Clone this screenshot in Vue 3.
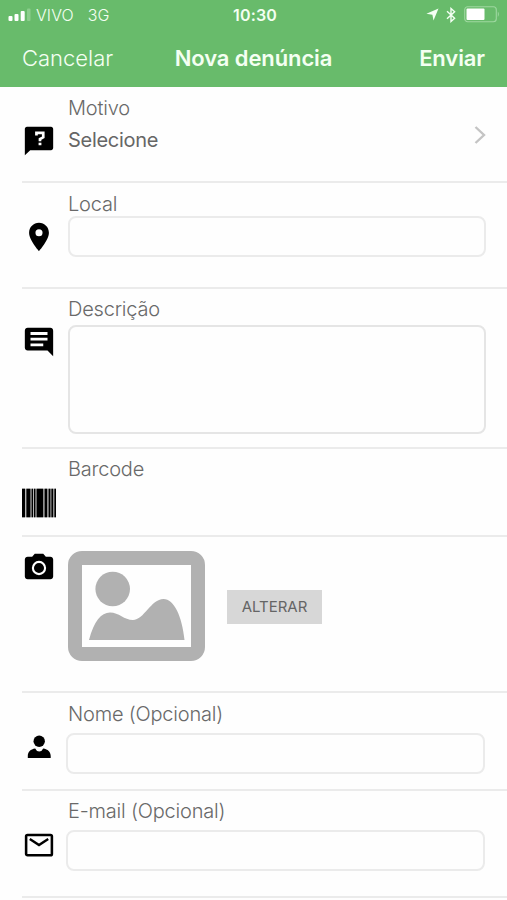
<script setup>
const bars = [
  { x: 0, w: 3 }, { x: 4.4, w: 4 }, { x: 9.6, w: 1.4 }, { x: 12, w: 1.4 },
  { x: 14.6, w: 6.6 }, { x: 22.6, w: 2.6 }, { x: 26.6, w: 1.8 }, { x: 29.4, w: 1.8 }, { x: 32.4, w: 2 },
]
</script>

<template>
  <div class="screen">
    <header class="header">
      <div class="status">
        <div class="carrier">
          <svg class="signal" width="24" height="13" viewBox="0 0 24 13">
            <rect x="0.5" y="8" width="4" height="5" rx="1" fill="#fff" />
            <rect x="6.5" y="6" width="4" height="7" rx="1" fill="#fff" />
            <rect x="12.7" y="3" width="4" height="10" rx="1" fill="#fff" />
            <rect x="19" y="0.5" width="3.5" height="12.5" rx="1" fill="#8bce8c" />
          </svg>
          <span class="vivo">VIVO</span>
          <span class="net">3G</span>
        </div>
        <span class="clock">10:30</span>
        <div class="indicators">
          <svg class="arrow" width="13" height="13" viewBox="0 0 13 13">
            <path d="M12.5 .5 7.5 12.5 6.4 6.7 .4 5.8z" fill="#f4fff4" />
          </svg>
          <svg class="bluetooth" width="10" height="16" viewBox="0 0 10 16">
            <path d="M1 4.3 8.6 11.3 5 14.5V1.5L8.6 4.7 1 11.7" fill="none" stroke="#f4fff4" stroke-width="1.4" />
          </svg>
          <svg class="battery" width="37" height="17" viewBox="0 0 37 17">
            <rect x="0.7" y="0.7" width="31.6" height="15" rx="3" fill="none" stroke="#9ed8a0" stroke-width="1.1" />
            <rect x="2.5" y="2.5" width="18" height="11.4" rx="1" fill="#fff" />
            <path d="M33.8 5.5q2.2 2.7 0 5.4z" fill="#9ed8a0" />
          </svg>
        </div>
      </div>
      <nav class="nav">
        <span class="cancel">Cancelar</span>
        <span class="title">Nova denúncia</span>
        <span class="send">Enviar</span>
      </nav>
    </header>

    <main class="form">
      <section class="row motivo">
        <svg class="icon" viewBox="0 0 24 24">
          <path d="M3.5 2h17c.8 0 1.5.7 1.5 1.5V17c0 .8-.7 1.5-1.5 1.5H5.800L2 22V3.500C2 2.700 2.700 2 3.500 2z" />
          <path d="M10.200 8.200V6.300h4.800v3.100l-2.300 1.300v1.500" fill="none" stroke="#fff" stroke-width="1.900" />
          <path d="M11.700 13.200h2v1.800h-2z" fill="#fff" />
        </svg>
        <div class="body">
          <label class="label">Motivo</label>
          <div class="value">Selecione</div>
        </div>
        <svg class="chevron" width="13" height="20" viewBox="0 0 13 20">
          <path d="M2.500 2 11 10 2.500 18" fill="none" stroke="#c4c4c4" stroke-width="2.400" />
        </svg>
      </section>

      <section class="row local">
        <svg class="icon" viewBox="0 0 24 24">
          <path d="M12 2C8.130 2 5 5.130 5 9c0 5.250 7 13 7 13s7-7.750 7-13c0-3.870-3.130-7-7-7zm0 9.500a2.500 2.500 0 1 1 0-5 2.500 2.500 0 0 1 0 5z" />
        </svg>
        <div class="body">
          <label class="label">Local</label>
          <div class="field"></div>
        </div>
      </section>

      <section class="row descricao">
        <svg class="icon" viewBox="0 0 24 24">
          <path d="M21.990 4c0-1.100-.89-2-1.990-2H4c-1.100 0-2 .9-2 2v12c0 1.100.9 2 2 2h14l4 4-.01-18z" />
          <path d="M6 5h12v2H6zM6 9h12v2H6zM6 13h9v2H6z" fill="#fff" />
        </svg>
        <div class="body">
          <label class="label">Descrição</label>
          <div class="field area"></div>
        </div>
      </section>

      <section class="row barcode">
        <svg class="icon" viewBox="0 0 34 34">
          <rect x="0" y="2.700" width="34" height="28.600" fill="#b5b5b5" />
          <rect v-for="b in bars" :key="b.x" :x="b.x" y="2.700" :width="b.w" height="28.600" />
        </svg>
        <div class="body">
          <label class="label">Barcode</label>
        </div>
      </section>

      <section class="row photo">
        <svg class="icon" viewBox="0 0 24 24">
          <path d="M9 2 7.170 4H4c-1.100 0-2 .9-2 2v12c0 1.100.9 2 2 2h16c1.100 0 2-.9 2-2V6c0-1.100-.9-2-2-2h-3.170L15 2z" />
          <circle cx="12" cy="12" r="4.300" fill="none" stroke="#fff" stroke-width="1.500" />
        </svg>
        <svg class="picture" width="137" height="110" viewBox="0 0 137 110">
          <rect x="7" y="7" width="123" height="96" rx="7" fill="none" stroke="#b1b1b1" stroke-width="14" />
          <circle cx="44.700" cy="38" r="17.300" fill="#b1b1b1" />
          <path d="M21 89C26 70 33 61.500 42 61.500C51 61.500 56 69 65 69C76 69 83 48 95.500 48C106 48 114 65 116.500 89z" fill="#b1b1b1" />
        </svg>
        <button class="change" type="button">ALTERAR</button>
      </section>

      <section class="row nome">
        <svg class="icon" viewBox="0 0 34 34">
          <circle cx="17.200" cy="11.300" r="5.700" />
          <path d="M5.800 28v-2c0-4 2.700-6.700 7.400-7.400q1.300 3 4 3t4-3c4.700.7 7.500 3.400 7.500 7.400v2z" />
        </svg>
        <div class="body">
          <label class="label">Nome (Opcional)</label>
          <div class="field"></div>
        </div>
      </section>

      <section class="row email">
        <svg class="icon" viewBox="0 0 24 24">
          <rect x="2.900" y="4.900" width="18.200" height="14.400" rx="1" fill="none" stroke="#000" stroke-width="1.800" />
          <path d="M5.500 7.700 12 12l6.500-4.300" fill="none" stroke="#000" stroke-width="1.700" />
        </svg>
        <div class="body">
          <label class="label">E-mail (Opcional)</label>
          <div class="field"></div>
        </div>
      </section>
    </main>
  </div>
</template>

<style>
body { background: #fefefe; overflow: hidden; }
</style>

<style scoped>
.screen {
  width: 507px;
  height: 900px;
  overflow: hidden;
  background: #fefefe;
  font-family: Inter, "Liberation Sans", sans-serif;
}
.header {
  box-sizing: border-box;
  height: 87px;
  background: #68bb6b;
  color: #f4fff2;
}
.status {
  display: grid;
  grid-template-columns: 1fr auto 1fr;
  align-items: center;
  height: 29px;
  padding: 0 8px;
}
.carrier { display: flex; align-items: center; font-size: 16px; font-weight: 300; }
.signal { margin-right: 4px; }
.vivo { letter-spacing: 0.1px; }
.net { margin-left: 14px; }
.clock { padding-left: 3px; font-size: 16px; font-weight: 600; letter-spacing: 0.2px; }
.indicators { display: flex; align-items: center; justify-content: flex-end; margin-right: -2px; }
.bluetooth { margin-left: 7px; }
.battery { margin-left: 8px; }
.nav {
  display: grid;
  grid-template-columns: 1fr auto 1fr;
  align-items: center;
  height: 58px;
  padding: 0 22px;
  font-size: 22px;
}
.cancel { font-weight: 300; }
.title { font-weight: 600; letter-spacing: -0.1px; }
.send { font-weight: 600; letter-spacing: -0.1px; text-align: right; }
.row {
  box-sizing: border-box;
  display: flex;
  align-items: flex-start;
  margin-left: 22px;
  padding-right: 21px;
  border-bottom: 2px solid #ebebeb;
}
.icon { flex: none; width: 34px; height: 34px; margin-right: 12px; }
.body { flex: 1; }
.label {
  display: block;
  line-height: 24px;
  font-size: 20px;
  font-weight: 300;
  letter-spacing: -0.2px;
  color: #696969;
}
.value { margin-top: 8px; line-height: 24px; font-size: 20px; letter-spacing: -0.3px; color: #666; }
.field {
  box-sizing: border-box;
  height: 41px;
  margin-top: 0;
  border: 2px solid #ebebeb;
  border-radius: 8px;
}
.area { height: 109px; margin-top: 4px; border-color: #e5e5e5; }
.motivo { height: 96px; padding-top: 9px; }
.motivo .icon { margin-top: 28px; }
.chevron { margin-top: 29px; }
.local { height: 106px; padding-top: 9px; }
.local .icon { margin-top: 28px; }
.descricao { height: 160px; padding-top: 8px; }
.descricao .icon { margin-top: 28px; }
.barcode { height: 88px; padding-top: 8px; }
.barcode .icon { margin-top: 29px; }
.photo { height: 156px; padding-top: 14px; }
.picture { flex: none; }
.change {
  width: 95px;
  height: 34px;
  margin: 39px 0 0 22px;
  padding: 0 0 2px;
  border: 0;
  background: #d7d7d7;
  color: #656565;
  font: 400 15px Inter, "Liberation Sans", sans-serif;
}
.nome { height: 98px; padding-top: 9px; }
.nome .icon { margin-top: 28px; }
.email { height: 107px; padding-top: 8px; }
.email .icon { margin-top: 29px; }
.nome .field, .email .field { margin: 7px 1px 0 -2px; }
</style>
